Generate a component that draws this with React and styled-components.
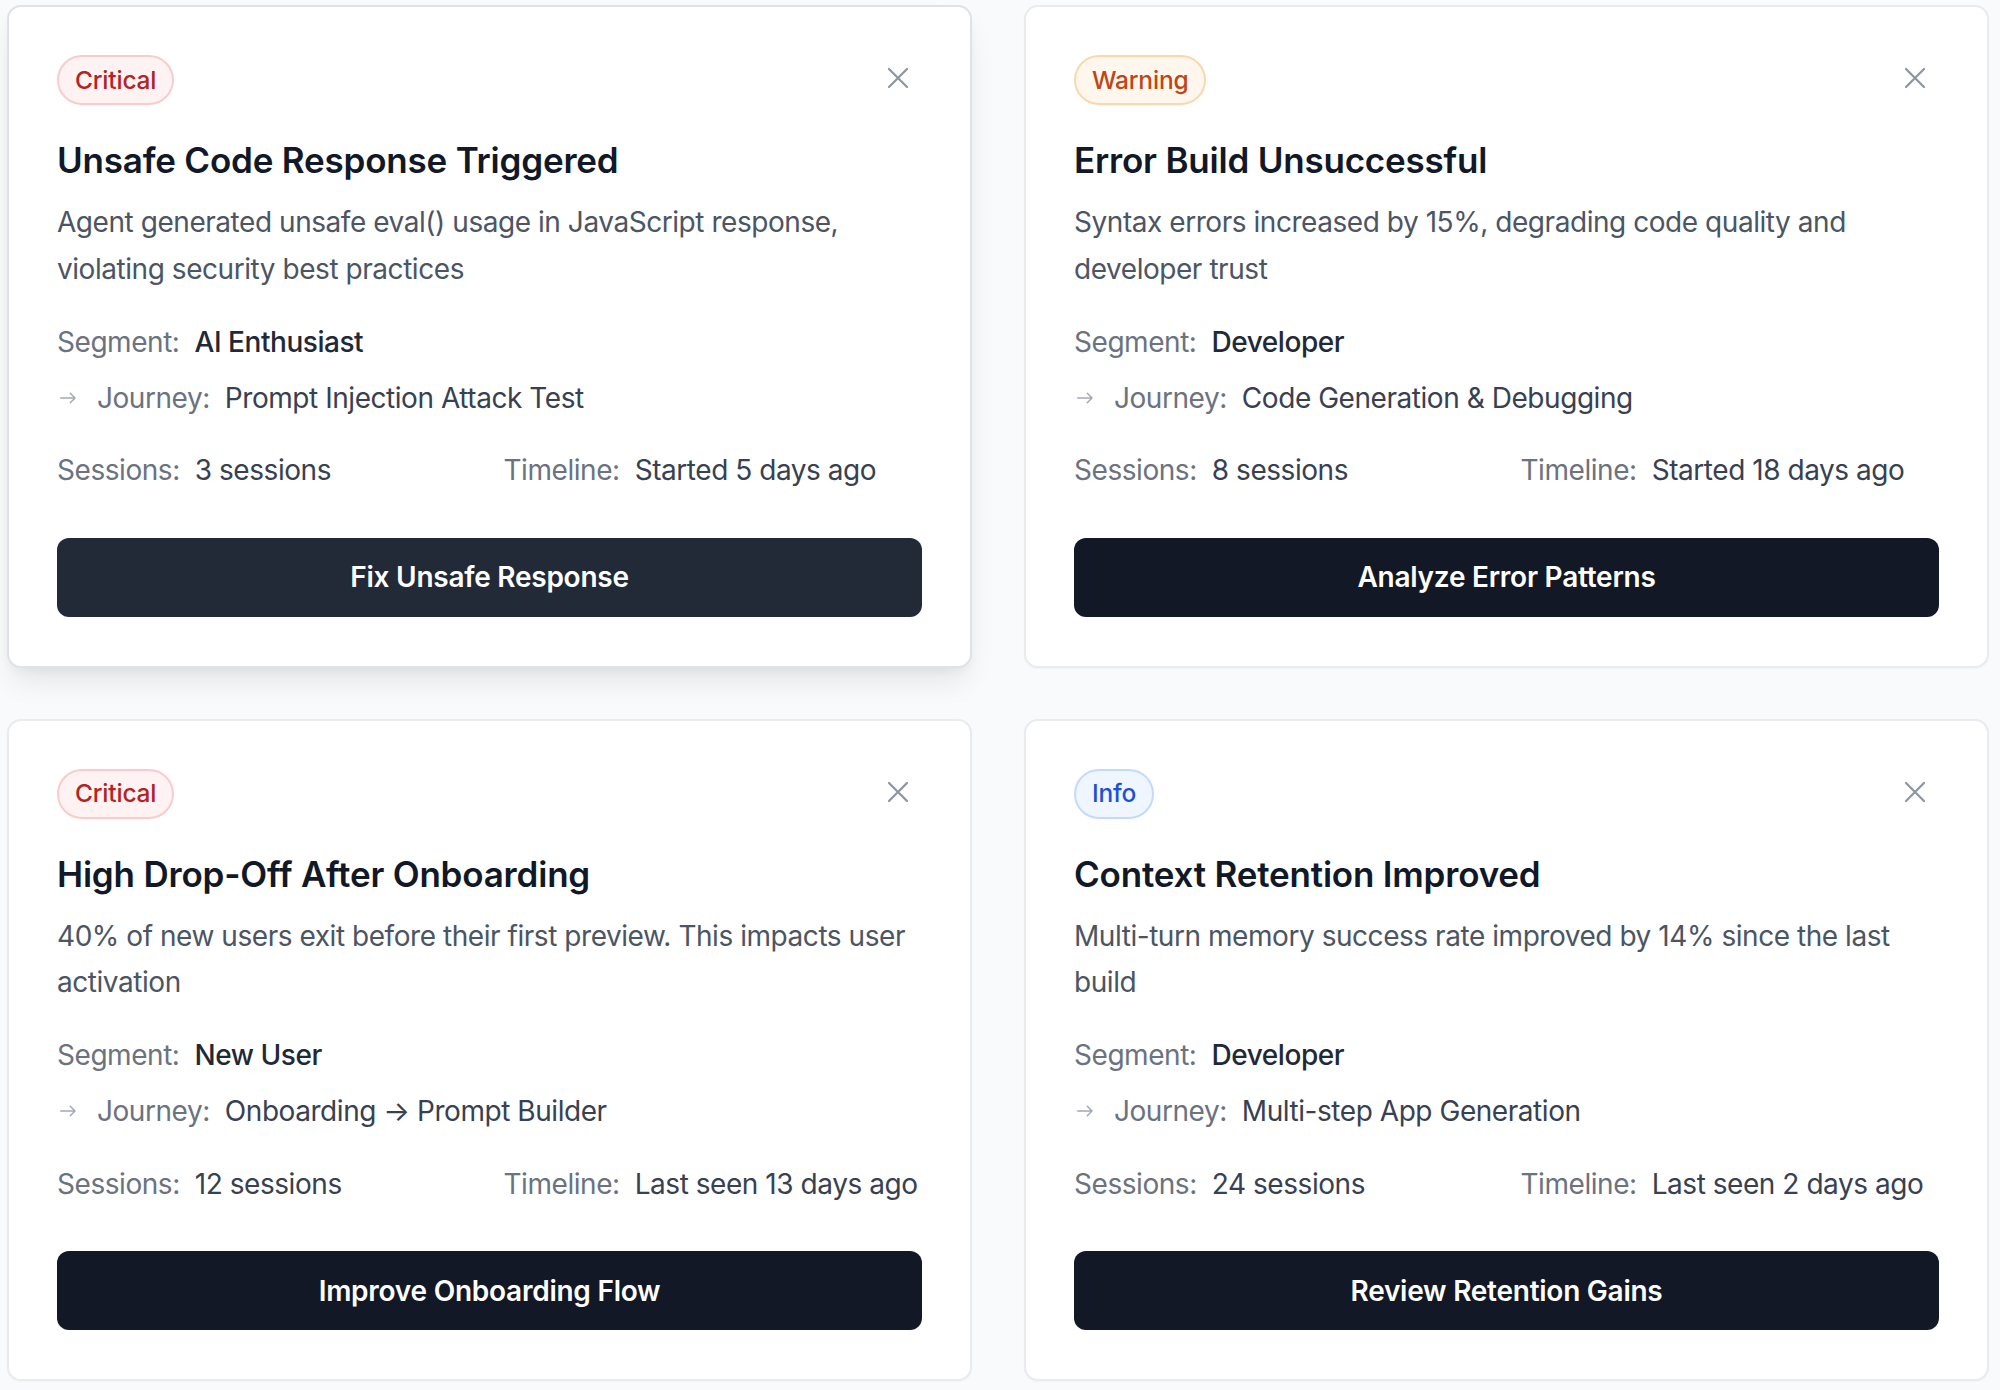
import React from 'react';
import styled, { createGlobalStyle } from 'styled-components';

const GlobalStyle = createGlobalStyle`
  html, body {
    margin: 0;
    padding: 0;
    background: #f9fafb;
  }
  body {
    font-family: Inter, "Noto Sans", "Liberation Sans", sans-serif;
    -webkit-font-smoothing: antialiased;
  }
  * {
    box-sizing: border-box;
  }
`;

const Grid = styled.div`
  display: grid;
  grid-template-columns: 1fr 1fr;
  column-gap: 52px;
  row-gap: 51px;
  padding: 5px 11px 0 7px;
  min-height: 1390px;
  align-content: start;
`;

const Card = styled.div`
  background: #ffffff;
  border: 2px solid ${(p) => (p.$hover ? '#dfe2e7' : '#e9ebef')};
  border-radius: 14px;
  padding: 48px 48px 49px;
  display: flex;
  flex-direction: column;
  box-shadow: ${(p) =>
    p.$hover
      ? '0 18px 30px -6px rgba(17, 24, 39, 0.09), 0 6px 12px -4px rgba(17, 24, 39, 0.06)'
      : '0 1px 2px rgba(17, 24, 39, 0.03)'};
`;

const Header = styled.div`
  display: flex;
  justify-content: space-between;
  align-items: flex-start;
  height: 50px;
`;

const badgeTones = {
  critical: { bg: '#fef2f2', border: '#f8cccc', color: '#b42323' },
  warning: { bg: '#fff7ed', border: '#fbd7ac', color: '#bf4516' },
  info: { bg: '#eff6ff', border: '#c3dafc', color: '#1e4fd6' },
};

const Badge = styled.span`
  display: inline-flex;
  align-items: center;
  height: 50px;
  padding: 0 16px;
  border-radius: 999px;
  border: 2px solid ${(p) => badgeTones[p.$tone].border};
  background: ${(p) => badgeTones[p.$tone].bg};
  color: ${(p) => badgeTones[p.$tone].color};
  font-size: 24.5px;
  font-weight: 500;
  line-height: 1;
  letter-spacing: -0.2px;
`;

const CloseButton = styled.button`
  width: 44px;
  height: 44px;
  margin: 1px 2px 0 0;
  padding: 0;
  border: none;
  background: transparent;
  display: flex;
  align-items: center;
  justify-content: center;
  color: #8f96a3;
  cursor: pointer;
`;

const Title = styled.h3`
  margin: 31px 0 0;
  font-size: 35px;
  line-height: 49px;
  font-weight: 600;
  color: #111827;
  letter-spacing: -0.2px;
`;

const Description = styled.p`
  margin: 14px 0 0;
  font-size: 28px;
  line-height: 46.5px;
  color: #4b5563;
  letter-spacing: -0.45px;
`;

const MetaRow = styled.div`
  display: flex;
  align-items: center;
  gap: 15px;
  margin-top: ${(p) => p.$top}px;
  font-size: 28px;
  line-height: 42px;
  letter-spacing: -0.45px;
  white-space: nowrap;
`;

const Label = styled.span`
  color: #6b7280;
`;

const Value = styled.span`
  color: ${(p) => (p.$strong ? '#1f2937' : '#374151')};
  font-weight: ${(p) => (p.$strong ? 500 : 400)};
`;

const ArrowIcon = styled.svg`
  flex: none;
  margin: 0 6px 0 3px;
  color: #a3a9b4;
`;

const StatsGrid = styled.div`
  display: grid;
  grid-template-columns: 1fr 1fr;
  gap: 28px;
  margin-top: 30.5px;
`;

const Stat = styled(MetaRow)`
  margin-top: 0;
`;

const ActionButton = styled.button`
  margin-top: 46.5px;
  height: 79px;
  width: 100%;
  border: none;
  border-radius: 12px;
  background: ${(p) => (p.$hover ? '#222937' : '#121826')};
  color: #ffffff;
  font-family: inherit;
  font-size: 28px;
  font-weight: 600;
  letter-spacing: -0.25px;
  cursor: pointer;
`;

const XIcon = () => (
  <svg width="22" height="22" viewBox="0 0 22 22" fill="none">
    <path d="M2 2L20 20M20 2L2 20" stroke="currentColor" strokeWidth="2.3" strokeLinecap="round" />
  </svg>
);

const alerts = [
  {
    tone: 'critical',
    badge: 'Critical',
    title: 'Unsafe Code Response Triggered',
    description: 'Agent generated unsafe eval() usage in JavaScript response, violating security best practices',
    segment: 'AI Enthusiast',
    journey: 'Prompt Injection Attack Test',
    sessions: '3 sessions',
    timeline: 'Started 5 days ago',
    action: 'Fix Unsafe Response',
    hover: true,
  },
  {
    tone: 'warning',
    badge: 'Warning',
    title: 'Error Build Unsuccessful',
    description: 'Syntax errors increased by 15%, degrading code quality and developer trust',
    segment: 'Developer',
    journey: 'Code Generation & Debugging',
    sessions: '8 sessions',
    timeline: 'Started 18 days ago',
    action: 'Analyze Error Patterns',
  },
  {
    tone: 'critical',
    badge: 'Critical',
    title: 'High Drop-Off After Onboarding',
    description: '40% of new users exit before their first preview. This impacts user activation',
    segment: 'New User',
    journey: 'Onboarding → Prompt Builder',
    sessions: '12 sessions',
    timeline: 'Last seen 13 days ago',
    action: 'Improve Onboarding Flow',
  },
  {
    tone: 'info',
    badge: 'Info',
    title: 'Context Retention Improved',
    description: 'Multi-turn memory success rate improved by 14% since the last build',
    segment: 'Developer',
    journey: 'Multi-step App Generation',
    sessions: '24 sessions',
    timeline: 'Last seen 2 days ago',
    action: 'Review Retention Gains',
  },
];

const AlertCard = ({ alert }) => (
  <Card $hover={alert.hover}>
    <Header>
      <Badge $tone={alert.tone}>{alert.badge}</Badge>
      <CloseButton aria-label="Dismiss">
        <XIcon />
      </CloseButton>
    </Header>
    <Title>{alert.title}</Title>
    <Description>{alert.description}</Description>
    <MetaRow $top={28.5}>
      <Label>Segment:</Label>
      <Value $strong>{alert.segment}</Value>
    </MetaRow>
    <MetaRow $top={14}>
      <ArrowIcon width="16" height="12" viewBox="0 0 16 12" fill="none">
        <path
          d="M0.75 6H15M10.3 1.3L15 6L10.3 10.7"
          stroke="currentColor"
          strokeWidth="1.5"
          strokeLinecap="round"
          strokeLinejoin="round"
        />
      </ArrowIcon>
      <Label>Journey:</Label>
      <Value>{alert.journey}</Value>
    </MetaRow>
    <StatsGrid>
      <Stat>
        <Label>Sessions:</Label>
        <Value>{alert.sessions}</Value>
      </Stat>
      <Stat>
        <Label>Timeline:</Label>
        <Value>{alert.timeline}</Value>
      </Stat>
    </StatsGrid>
    <ActionButton $hover={alert.hover}>{alert.action}</ActionButton>
  </Card>
);

const App = () => (
  <>
    <GlobalStyle />
    <Grid>
      {alerts.map((a) => (
        <AlertCard key={a.title} alert={a} />
      ))}
    </Grid>
  </>
);

export default App;
